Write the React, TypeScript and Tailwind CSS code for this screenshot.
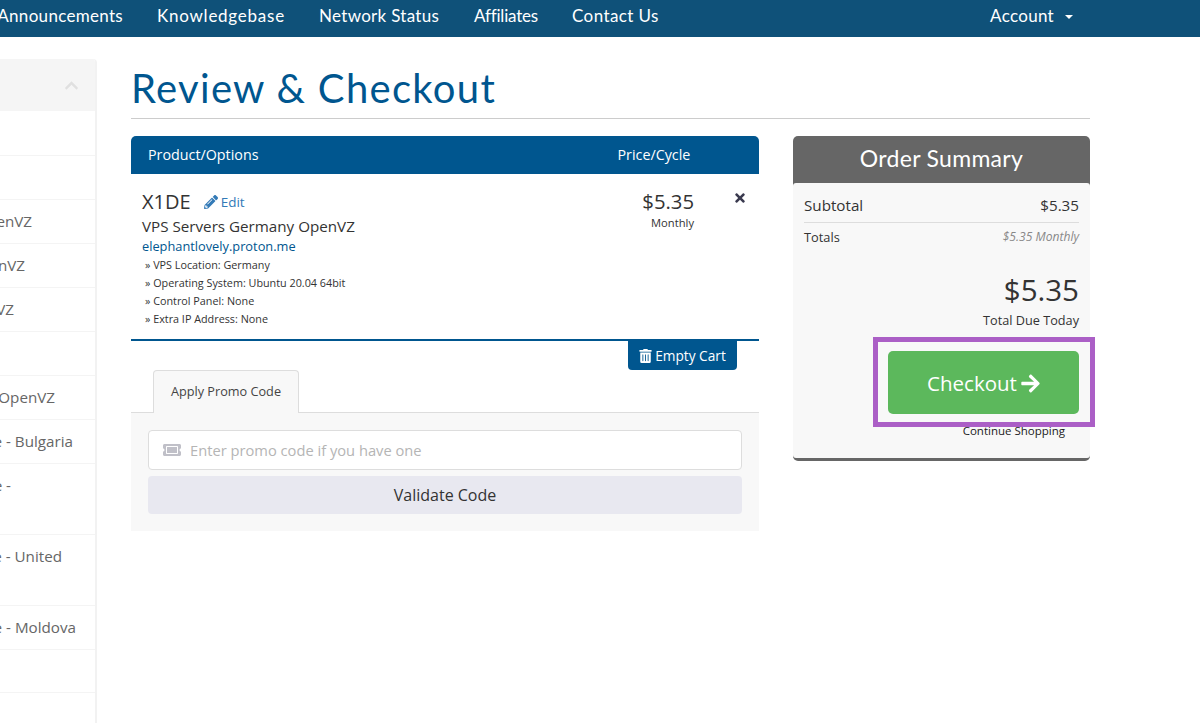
import React from "react";
import { FaPencilAlt, FaTimes, FaTrashAlt, FaArrowRight, FaTicketAlt, FaChevronUp } from "react-icons/fa";

const nav = "font-['Lato','Liberation_Sans',sans-serif]";

const rows: { text: string; h: string; pr: string }[] = [
  { text: "", h: "h-[45px]", pr: "pr-0" },
  { text: "", h: "h-[44px]", pr: "pr-0" },
  { text: "VPS Servers Russia OpenVZ", h: "h-[44px]", pr: "pr-[63px]" },
  { text: "VPS Servers USA OpenVZ", h: "h-[44px]", pr: "pr-[70px]" },
  { text: "VPS Servers UK OpenVZ", h: "h-[44px]", pr: "pr-[81px]" },
  { text: "", h: "h-[44px]", pr: "pr-0" },
  { text: "VPS Servers Germany OpenVZ", h: "h-[44px]", pr: "pr-[40px]" },
  { text: "Dedicated Server Storage - Bulgaria", h: "h-[44px]", pr: "pr-[22px]" },
  { text: "Dedicated Server Storage -", h: "h-[71px] pb-[27px]", pr: "pr-[84px]" },
  { text: "Dedicated Server Storage - United", h: "h-[71px] pb-[27px]", pr: "pr-[33px]" },
  { text: "Dedicated Server Storage - Moldova", h: "h-[44px]", pr: "pr-[19px]" },
  { text: "", h: "h-[43px]", pr: "pr-0" },
  { text: "", h: "h-[31px]", pr: "pr-0" },
];

const details = [
  "VPS Location: Germany",
  "Operating System: Ubuntu 20.04 64bit",
  "Control Panel: None",
  "Extra IP Address: None",
];

export default function App() {
  return (
    <div className="h-[723px] w-[1200px] overflow-hidden bg-white font-['Open_Sans',sans-serif] text-[#333]">
      <nav className={`${nav} flex h-[37px] items-center bg-[#0f5179] pb-[5px] text-[17px] tracking-[0.3px] text-white`}>
        <div className="flex flex-1 items-center justify-start overflow-hidden">
          <span className="ml-[-11px] w-[134px] whitespace-nowrap text-right">Announcements</span>
          <span className="ml-[34px] w-[128px] whitespace-nowrap tracking-[0.75px]">Knowledgebase</span>
          <span className="ml-[34px] w-[121px] whitespace-nowrap">Network Status</span>
          <span className="ml-[34px] w-[64px] whitespace-nowrap tracking-[-0.2px]">Affiliates</span>
          <span className="ml-[34px] whitespace-nowrap tracking-[0.4px]">Contact Us</span>
        </div>
        <div className="flex items-center pr-[127px]">
          <span>Account</span>
          <span className="ml-[11px] mt-[2px] h-0 w-0 border-x-[4px] border-t-[4px] border-x-transparent border-t-white" />
        </div>
      </nav>

      <div className="flex items-start">
        <aside className="mt-[22px] w-[97px] shrink-0 overflow-hidden rounded-tr-[4px] border-r-2 border-[#f2f2f2]">
          <div className="flex h-[52px] items-center justify-end bg-[#f5f5f5] pr-[16px] text-[#e0e0e0]">
            <FaChevronUp className="h-[15px] w-[15px]" />
          </div>
          {rows.map((r, i) => (
            <div
              key={i}
              className={`flex items-center justify-end whitespace-nowrap border-b border-[#f4f4f4] text-[15.2px] text-[#666] ${r.h} ${r.pr}`}
            >
              {r.text}
            </div>
          ))}
        </aside>

        <main className="ml-[34px] w-[959px]">
          <h1 className={`${nav} mt-[26px] h-[56px] border-b border-[#cccccc] text-[40px] font-normal leading-[50px] tracking-[1.3px] text-[#00568f]`}>
            Review &amp; Checkout
          </h1>

          <div className="mt-[17px] flex items-start justify-between">
            <section className="w-[628px]">
              <div className="flex h-[38px] items-center rounded-t-[5px] bg-[#00568f] text-[14.3px] font-medium text-white">
                <span className="ml-[17px]">Product/Options</span>
                <span className="ml-[359px]">Price/Cycle</span>
              </div>

              <div className="flex h-[167px] border-b-2 border-[#00568f]">
                <div className="w-[470px] pl-[11px] pt-[14px]">
                  <div className="flex h-[26px] items-center">
                    <span className="mt-[1px] text-[20px] leading-[26px]">X1DE</span>
                    <FaPencilAlt className="ml-[13px] mt-[2px] h-[14px] w-[14px] text-[#337ab7]" />
                    <span className="ml-[3px] mt-[2px] text-[13.5px] text-[#337ab7]">Edit</span>
                  </div>
                  <div className="mt-[1px] text-[15.2px] leading-[22px]">VPS Servers Germany OpenVZ</div>
                  <div className="mt-[1px] text-[12.8px] leading-[17px] text-[#00568f]">elephantlovely.proton.me</div>
                  <ul className="mt-[1px] pl-[3px] text-[10.8px] leading-[18px]">
                    {details.map((d) => (
                      <li key={d}>» {d}</li>
                    ))}
                  </ul>
                </div>
                <div className="w-[93px] pt-[14px] text-right">
                  <div className="text-[20.3px] leading-[26px]">$5.35</div>
                  <div className="text-[11.2px] leading-[18px]">Monthly</div>
                </div>
                <div className="pl-[40px] pt-[17px] text-[#3a3a4f]">
                  <FaTimes className="h-[14px] w-[12px]" />
                </div>
              </div>

              <div className="flex justify-end pr-[22px]">
                <button className="flex h-[29px] w-[109px] items-center justify-center gap-[3px] rounded-b-[4px] bg-[#00568f] pt-[1px] text-[13.7px] text-white">
                  <FaTrashAlt className="h-[14px] w-[13px]" />
                  Empty Cart
                </button>
              </div>

              <div className="relative z-10 mb-[-1px] ml-[22px] flex h-[43px] w-[146px] items-center justify-center rounded-t-[4px] border border-b-0 border-[#dddddd] bg-[#f8f8f8] text-[12.7px] text-[#444]">
                Apply Promo Code
              </div>
              <div className="h-[119px] border-t border-[#dddddd] bg-[#f8f8f8] px-[17px] pt-[17px]">
                <div className="flex h-[40px] items-center rounded-[4px] border border-[#dddddd] bg-white pl-[14px]">
                  <FaTicketAlt className="h-[16px] w-[18px] text-[#c0c0c8]" />
                  <input
                    readOnly
                    placeholder="Enter promo code if you have one"
                    className="ml-[9px] flex-1 bg-transparent text-[14.7px] outline-none placeholder:text-[#b5b5b5]"
                  />
                </div>
                <button className="mt-[6px] h-[38px] w-full rounded-[4px] bg-[#e8e8f0] text-[16px] text-[#333]">
                  Validate Code
                </button>
              </div>
            </section>

            <section className="w-[297px] rounded-[5px] border-b-[3px] border-[#666] bg-[#666]">
              <div className="h-[47px] text-center">
                <span className={`${nav} text-[23px] font-normal leading-[45px] tracking-[0.3px] text-white`}>Order Summary</span>
              </div>
              <div className="h-[275px] rounded-[3px] bg-[#f8f8f8] px-[11px]">
                <div className="flex h-[40px] items-center justify-between border-b border-[#dddddd] pt-[5px] text-[15.2px]">
                  <span>Subtotal</span>
                  <span>$5.35</span>
                </div>
                <div className="flex h-[29px] items-center justify-between text-[12.8px]">
                  <span>Totals</span>
                  <span className="text-[12.1px] italic text-[#888]">$5.35 Monthly</span>
                </div>
                <div className="mt-[18px] text-right text-[29.5px] leading-[40px]">$5.35</div>
                <div className="mt-[1px] text-right text-[12.7px] leading-[18px]">Total Due Today</div>
                <div className="relative ml-[84px] mt-[22px]">
                  <button className="flex h-[63px] w-[191px] items-center justify-center gap-[4px] rounded-[5px] bg-[#5cb85c] pt-[1px] text-[20.5px] text-white">
                    Checkout
                    <FaArrowRight className="h-[21px] w-[19px]" />
                  </button>
                  <div className="pointer-events-none absolute bottom-[-13px] left-[-15px] right-[-16px] top-[-14px] border-[5px] border-[#ab5fc6]" />
                </div>
                <div className="mr-[14px] mt-[10px] text-right text-[11.5px] leading-[14px] text-[#222]">
                  Continue Shopping
                </div>
              </div>
            </section>
          </div>
        </main>
      </div>
    </div>
  );
}
